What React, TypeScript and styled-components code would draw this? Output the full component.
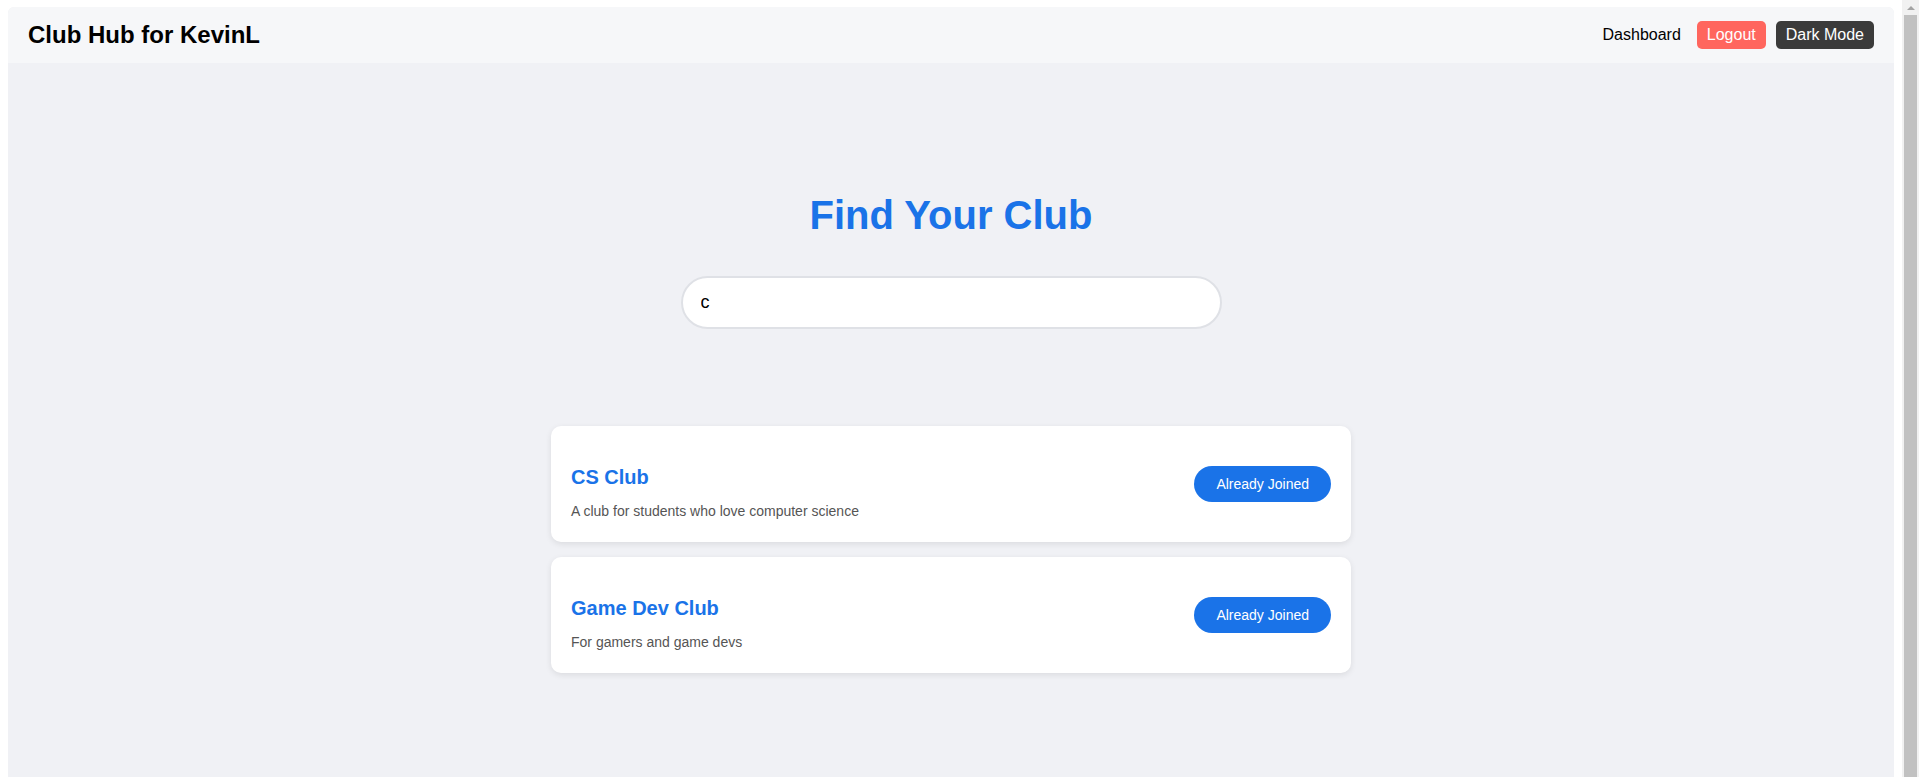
import { FC } from 'react'
import { styled, createGlobalStyle } from 'styled-components'

type Club = {
  id: number
  name: string
  description: string
}

const clubs: Club[] = [
  { id: 1, name: 'CS Club', description: 'A club for students who love computer science' },
  { id: 2, name: 'Game Dev Club', description: 'For gamers and game devs' },
]

const GlobalStyle = createGlobalStyle`
  body {
    margin: 7px 25px 8px 8px;
    background: #ffffff;
    font-family: "Liberation Sans", Arial, sans-serif;
  }
`

// the browser's scrollbar in the reference, drawn over the right edge
const ScrollTrack = styled.div`
  position: fixed;
  top: 0;
  right: 0;
  display: flex;
  flex-direction: column;
  align-items: center;
  width: 17px;
  height: 100vh;
  background: #f1f1f1;
`

const ScrollArrow = styled.div`
  width: 0;
  height: 0;
  margin: 6px 0 5px;
  border-left: 4px solid transparent;
  border-right: 4px solid transparent;
  border-bottom: 4px solid #a3a3a3;
`

const ScrollThumb = styled.div`
  flex: 1;
  width: 13px;
  background: #c1c1c1;
`

const Shell = styled.div`
  min-height: 100vh;
  background: #f0f1f5;
  border-radius: 6px 6px 0 0;
  overflow: hidden;
`

const TopBar = styled.header`
  display: flex;
  align-items: center;
  justify-content: space-between;
  height: 56px;
  padding: 0 20px;
  background: #f6f7f9;
`

const Brand = styled.h1`
  margin: 0;
  font-size: 24px;
  font-weight: 700;
  color: #000;
`

const Nav = styled.nav`
  display: flex;
  align-items: center;
  gap: 10px;
`

const NavLink = styled.a`
  margin-right: 6px;
  font-size: 16px;
  color: #000;
  text-decoration: none;
  cursor: pointer;
`

const NavButton = styled.button<{ $bg: string }>`
  border: none;
  border-radius: 5px;
  padding: 5px 10px;
  font-family: inherit;
  font-size: 16px;
  color: #fff;
  background: ${({ $bg }) => $bg};
  cursor: pointer;
`

const Main = styled.main`
  display: flex;
  flex-direction: column;
  align-items: center;
  padding: 80px 20px;
`

const Heading = styled.h2`
  margin: 50px 0 38px;
  font-size: 40px;
  font-weight: 700;
  color: #1a73e8;
`

const Search = styled.input`
  box-sizing: border-box;
  width: 541px;
  padding: 14px 18px;
  border: 2px solid #dfe1e6;
  border-radius: 30px;
  background: #fff;
  font-family: inherit;
  font-size: 18px;
  color: #000;
  outline: none;
`

const ClubList = styled.ul`
  display: flex;
  flex-direction: column;
  gap: 15px;
  width: 800px;
  margin: 97px 0 0;
  padding: 0;
  list-style: none;
`

const Card = styled.li`
  display: flex;
  align-items: center;
  justify-content: space-between;
  padding: 20px;
  background: #fff;
  border-radius: 10px;
  box-shadow: 0 2px 6px rgba(0, 0, 0, 0.09);
`

const ClubName = styled.h3`
  margin: 20px 0 14px;
  font-size: 20px;
  font-weight: 700;
  color: #1a73e8;
`

const ClubText = styled.p`
  margin: 0 0 3px;
  font-size: 14px;
  color: #555;
`

const JoinButton = styled.button`
  border: none;
  border-radius: 20px;
  padding: 10px 22px;
  font-family: inherit;
  font-size: 14px;
  color: #fff;
  background: #1a73e8;
  cursor: pointer;
`

const App: FC = () => {
  return (
    <>
      <GlobalStyle />
      <Shell>
        <TopBar>
          <Brand>Club Hub for KevinL</Brand>
          <Nav>
            <NavLink>Dashboard</NavLink>
            <NavButton $bg="#ff665e">Logout</NavButton>
            <NavButton $bg="#3b3b3b">Dark Mode</NavButton>
          </Nav>
        </TopBar>
        <Main>
          <Heading>Find Your Club</Heading>
          <Search type="text" defaultValue="c" />
          <ClubList>
            {clubs.map((club) => (
              <Card key={club.id}>
                <div>
                  <ClubName>{club.name}</ClubName>
                  <ClubText>{club.description}</ClubText>
                </div>
                <JoinButton>Already Joined</JoinButton>
              </Card>
            ))}
          </ClubList>
        </Main>
      </Shell>
      <ScrollTrack>
        <ScrollArrow />
        <ScrollThumb />
      </ScrollTrack>
    </>
  )
}

export default App
